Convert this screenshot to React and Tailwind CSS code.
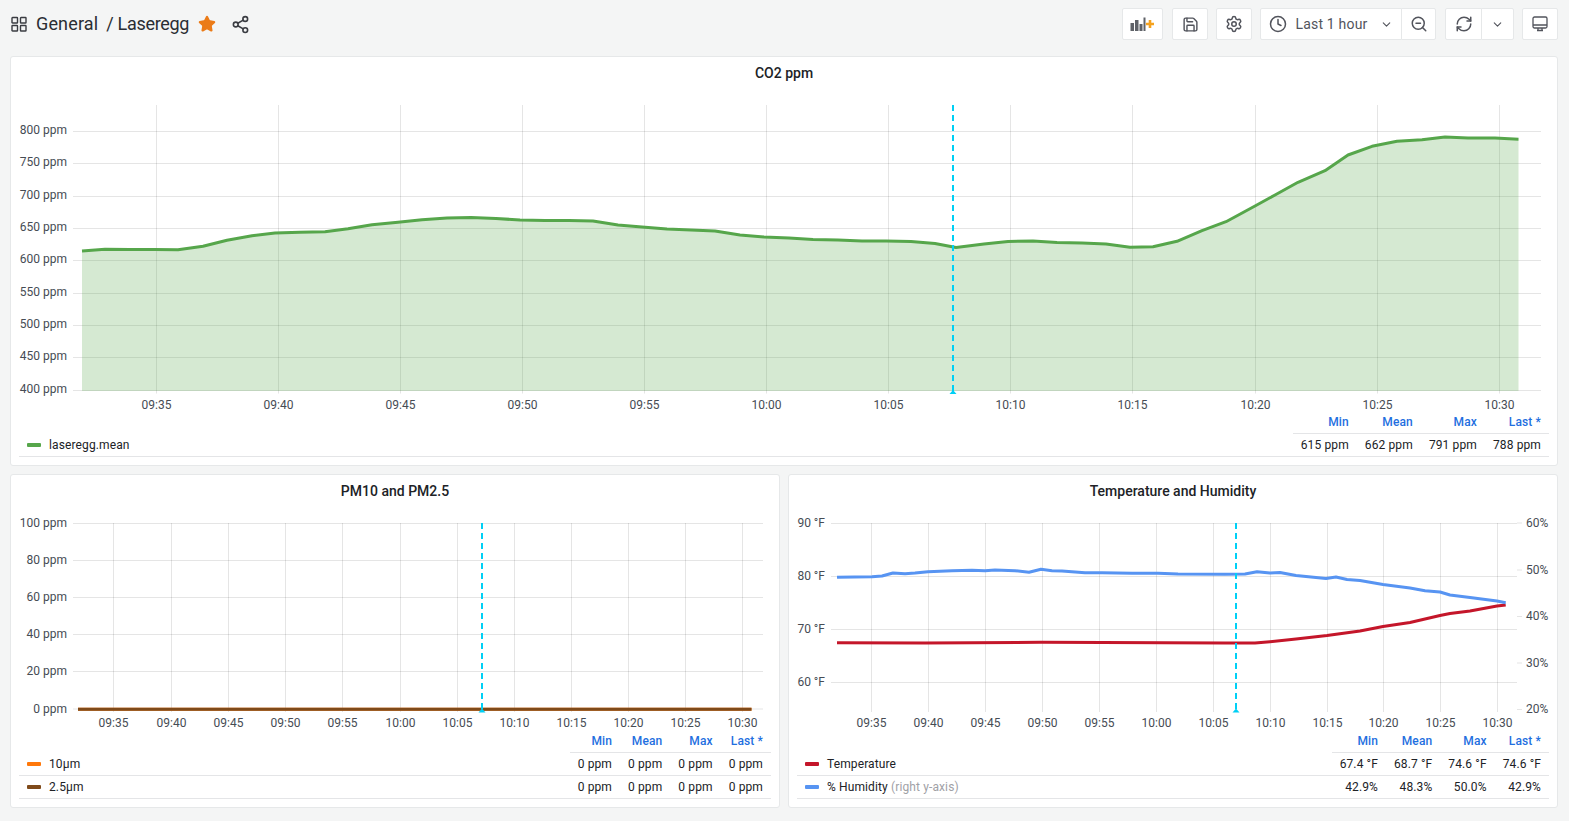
import React from 'react';
import { Clock, ChevronDown, ZoomOut, RefreshCw, Save, Settings, Share2, Star } from 'lucide-react';

const co2Line = [
  [82, 251], [105, 249.3], [130, 249.5], [154, 249.6], [178, 249.7], [203, 246.3], [227, 240.3], [252, 235.7], [275, 233],
  [300, 232.2], [325, 231.7], [348, 228.7], [372, 224.7], [398, 222.3], [422, 219.7], [447, 218], [471, 217.5], [496, 218.5],
  [520, 220], [545, 220.5], [569, 220.5], [593, 221], [618, 225], [642, 227], [667, 229], [691, 230], [715, 231],
  [740, 235], [764, 237], [789, 238], [813, 239.5], [838, 240], [862, 241], [886, 241], [911, 241.5], [935, 243.5],
  [956, 247.5], [984, 244], [1008, 241.5], [1033, 241], [1057, 242.5], [1082, 243], [1106, 244], [1130, 247.3],
  [1153, 246.7], [1177, 241.3], [1202, 230.7], [1226, 221.7], [1255, 206], [1275, 195], [1298, 182.3], [1325, 170.7],
  [1348, 155], [1372, 146.3], [1397, 141.3], [1422, 139.7], [1445, 137], [1468, 138], [1495, 138], [1518.5, 139.3],
];

const humidityLine = [
  [837, 577.3], [872, 576.7], [882, 576], [893, 573], [905, 573.7], [915, 573], [928, 571.7], [952, 570.7], [972, 570.3],
  [985, 570.7], [995, 570], [1015, 570.7], [1029, 572.3], [1041, 569.3], [1052, 570.7], [1062, 571], [1085, 572.7],
  [1102, 572.7], [1132, 573.3], [1158, 573.3], [1178, 574], [1225, 574.3], [1245, 574], [1257, 571.7], [1270, 573],
  [1280, 572.5], [1296, 575.5], [1326, 578.5], [1336, 577], [1347, 579.5], [1360, 580.5], [1383, 584.5], [1410, 588],
  [1425, 590.7], [1440, 592], [1450, 595], [1470, 597.5], [1497, 601], [1505.7, 602.7],
];

const tempLine = [
  [837, 642.7], [925, 643], [1041, 642.3], [1225, 643], [1255, 643],
  [1270, 641.7], [1296, 639], [1327, 635.5], [1360, 631], [1383, 626.5], [1410, 622.5], [1440, 615.5], [1450, 613.5],
  [1470, 611], [1497, 606], [1505.7, 605],
];

const times = ['09:35', '09:40', '09:45', '09:50', '09:55', '10:00', '10:05', '10:10', '10:15', '10:20', '10:25', '10:30'];

const toPoints = (line) => line.map((p) => p.join(',')).join(' ');

const Chart = ({ box, xTicks, yTicks, rightTicks = [], gridRight, top, bottom, tickFrom, hoverX, labelDy = 2.5, children }) => (
  <svg viewBox={box.join(' ')} width={box[2]} height={box[3]} className="block shrink-0">
    {yTicks.map(([label, y]) => (
      <g key={label}>
        <line x1={tickFrom} x2={gridRight} y1={y} y2={y} stroke="#000" strokeOpacity="0.1" />
        <text x={tickFrom - 6} y={y + labelDy} textAnchor="end" className="text-xs fill-[#464c54]">{label}</text>
      </g>
    ))}
    {xTicks.map((x, i) => (
      <g key={x}>
        <line x1={x} x2={x} y1={top} y2={bottom + 3} stroke="#000" strokeOpacity="0.1" />
        <text x={x} y={bottom + 18} textAnchor="middle" className="text-xs fill-[#464c54]">{times[i]}</text>
      </g>
    ))}
    {rightTicks.map(([label, y]) => (
      <g key={label}>
        <line x1={gridRight} x2={gridRight + 5} y1={y} y2={y} stroke="#000" strokeOpacity="0.1" />
        <text x={gridRight + 9} y={y + labelDy} className="text-xs fill-[#464c54]">{label}</text>
      </g>
    ))}
    {children}
    <line x1={hoverX} x2={hoverX} y1={top} y2={bottom + 1} stroke="#00d0f5" strokeWidth="2" strokeDasharray="6 4" />
    <polygon points={`${hoverX - 3.5},${bottom + 3.5} ${hoverX + 3.5},${bottom + 3.5} ${hoverX},${bottom - 0.5}`} fill="#00d0f5" />
  </svg>
);

const Legend = ({ rows }) => (
  <table className="w-full text-xs tracking-[0.12px] text-[#202226] border-separate border-spacing-0">
    <thead>
      <tr>
        <th className="w-full" />
        {['Min', 'Mean', 'Max', 'Last *'].map((h) => (
          <th key={h} className="h-[23px] px-2 text-right font-medium text-[#1f6fe0] border-b border-[#e4e5e7] whitespace-nowrap">{h}</th>
        ))}
      </tr>
    </thead>
    <tbody>
      {rows.map((row) => (
        <tr key={row.name}>
          <td className="h-[23px] px-2 border-b border-[#e4e5e7]">
            <div className="flex items-center gap-2">
              <span className={`w-[14px] h-[4px] rounded-[1px] ${row.color}`} />
              <span>
                {row.name}
                {row.note && <span className="text-[#9fa1a6]"> {row.note}</span>}
              </span>
            </div>
          </td>
          {row.values.map((v, i) => (
            <td key={i} className="h-[23px] px-2 text-right border-b border-[#e4e5e7] whitespace-nowrap">{v}</td>
          ))}
        </tr>
      ))}
    </tbody>
  </table>
);

const Panel = ({ title, children, legend }) => (
  <section className="flex flex-col bg-white border border-[#e6e8e9] rounded-[3px]">
    <h2 className="h-[32px] shrink-0 flex items-center justify-center text-sm font-medium text-[#202226]">{title}</h2>
    {children}
    <div className="px-2 pb-2">{legend}</div>
  </section>
);

const ToolButton = ({ className = '', children }) => (
  <button className={`h-8 flex items-center justify-center bg-white border border-[#e6e8e9] text-[#52545c] ${className}`}>
    {children}
  </button>
);

const AddPanelIcon = () => (
  <svg width="25" height="16" viewBox="0 0 25 16">
    <g fill="#5f6268">
      <rect x="0.5" y="7" width="3.5" height="8" />
      <rect x="5" y="4" width="3.5" height="11" />
      <rect x="9.5" y="8" width="3" height="7" />
      <rect x="13.5" y="1.5" width="2" height="13.5" />
    </g>
    <path d="M20 4v8M16 8h8" stroke="#f5a21e" strokeWidth="2.6" />
  </svg>
);

const GridIcon = () => (
  <svg width="16" height="16" viewBox="0 0 16 16" fill="none" stroke="#3a3c42" strokeWidth="1.4">
    <rect x="1" y="1.5" width="5.5" height="5.5" rx="0.6" />
    <rect x="9.5" y="1.5" width="5.5" height="5.5" rx="0.6" />
    <rect x="1" y="9.5" width="5.5" height="5.5" rx="0.6" />
    <rect x="9.5" y="9.5" width="5.5" height="5.5" rx="0.6" />
  </svg>
);

const TvIcon = () => (
  <svg width="16" height="16" viewBox="0 0 16 16" fill="none" stroke="#52545c" strokeWidth="1.3">
    <rect x="1" y="1" width="14" height="11" rx="1.5" />
    <path d="M1 9h14M5 14.5h6" />
    <path d="M6 12v2.5M10 12v2.5" />
  </svg>
);

const App = () => (
  <div className="min-h-screen bg-[#f4f5f5] pl-[10px] pr-[11px] font-['Roboto',sans-serif]">
    <header className="h-[56px] flex items-center justify-between pb-[8px]">
      <div className="flex items-center text-[#2a2d33]">
        <span className="ml-[1px] mr-[9px]"><GridIcon /></span>
        <span className="text-lg tracking-[0.15px]">General</span>
        <span className="text-lg ml-[8px] tracking-[-0.3px]">/ Laseregg</span>
        <Star size={18} className="ml-[9px] text-[#eb7b18] fill-[#eb7b18]" />
        <Share2 size={19} className="ml-[15px] text-[#3a3c42]" />
      </div>
      <div className="flex items-center">
        <ToolButton className="w-[41px] rounded-[2px]"><AddPanelIcon /></ToolButton>
        <ToolButton className="w-[36px] ml-[9px] rounded-[2px]"><Save size={17} /></ToolButton>
        <ToolButton className="w-[36px] ml-[8px] rounded-[2px]"><Settings size={18} /></ToolButton>
        <ToolButton className="w-[142px] ml-[8px] rounded-l-[2px] gap-[8px] text-sm tracking-[0.2px]">
          <Clock size={18} />
          <span>Last 1 hour</span>
          <ChevronDown size={13} className="ml-[4px]" />
        </ToolButton>
        <ToolButton className="w-[35px] -ml-px rounded-r-[2px]"><ZoomOut size={18} /></ToolButton>
        <ToolButton className="w-[37px] ml-[9px] rounded-l-[2px]"><RefreshCw size={18} /></ToolButton>
        <ToolButton className="w-[33px] -ml-px rounded-r-[2px]"><ChevronDown size={13} /></ToolButton>
        <ToolButton className="w-[36px] ml-[8px] rounded-[2px]"><TvIcon /></ToolButton>
      </div>
    </header>

    <Panel
      title="CO2 ppm"
      legend={<Legend rows={[{ name: 'laseregg.mean', color: 'bg-[#56a64b]', values: ['615 ppm', '662 ppm', '791 ppm', '788 ppm'] }]} />}
    >
      <Chart
        box={[11, 89, 1546, 322]}
        xTicks={[156.5, 278.5, 400.5, 522.5, 644.5, 766.5, 888.5, 1010.5, 1132.5, 1255.5, 1377.5, 1499.5]}
        yTicks={[['800 ppm', 131.5], ['750 ppm', 163.5], ['700 ppm', 196.5], ['650 ppm', 228.5], ['600 ppm', 260.5], ['550 ppm', 293.5], ['500 ppm', 325.5], ['450 ppm', 357.5], ['400 ppm', 390.5]]}
        gridRight={1541}
        tickFrom={73}
        top={105}
        bottom={390.5}
        hoverX={953}
      >
        <polygon points={`82,391 ${toPoints(co2Line)} 1518.5,391`} fill="#56a64b" fillOpacity="0.25" />
        <polyline points={toPoints(co2Line)} fill="none" stroke="#56a64b" strokeWidth="3" strokeLinejoin="round" />
      </Chart>
    </Panel>

    <div className="grid grid-cols-[770px_1fr] gap-[8px] mt-[8px]">
      <Panel
        title="PM10 and PM2.5"
        legend={
          <Legend
            rows={[
              { name: '10µm', color: 'bg-[#ff780a]', values: ['0 ppm', '0 ppm', '0 ppm', '0 ppm'] },
              { name: '2.5µm', color: 'bg-[#7f4a1a]', values: ['0 ppm', '0 ppm', '0 ppm', '0 ppm'] },
            ]}
          />
        }
      >
        <Chart
          box={[11, 507, 768, 223]}
          xTicks={[113.5, 171.5, 228.5, 285.5, 342.5, 400.5, 457.5, 514.5, 571.5, 628.5, 685.5, 742.5]}
          yTicks={[['100 ppm', 523.5], ['80 ppm', 560.5], ['60 ppm', 597.5], ['40 ppm', 634.5], ['20 ppm', 671.5], ['0 ppm', 709]]}
          gridRight={763}
          tickFrom={73}
          top={523}
          bottom={709}
          hoverX={482}
          labelDy={3.5}
        >
          <line x1="78" x2="751.5" y1="709.3" y2="709.3" stroke="#ff780a" strokeWidth="3" />
          <line x1="78" x2="751.5" y1="709.3" y2="709.3" stroke="#7f4a1a" strokeWidth="3" />
        </Chart>
      </Panel>

      <Panel
        title="Temperature and Humidity"
        legend={
          <Legend
            rows={[
              { name: 'Temperature', color: 'bg-[#c4162a]', values: ['67.4 °F', '68.7 °F', '74.6 °F', '74.6 °F'] },
              { name: '% Humidity', note: '(right y-axis)', color: 'bg-[#5794f2]', values: ['42.9%', '48.3%', '50.0%', '42.9%'] },
            ]}
          />
        }
      >
        <Chart
          box={[789, 507, 768, 223]}
          xTicks={[871.5, 928.5, 985.5, 1042.5, 1099.5, 1156.5, 1213.5, 1270.5, 1327.5, 1383.5, 1440.5, 1497.5]}
          yTicks={[['90 °F', 523.5], ['80 °F', 576.5], ['70 °F', 629.5], ['60 °F', 682.5]]}
          rightTicks={[['60%', 523], ['50%', 570], ['40%', 616.5], ['30%', 663], ['20%', 709.5]]}
          gridRight={1517}
          tickFrom={831}
          top={523}
          bottom={709}
          hoverX={1236}
          labelDy={3.5}
        >
          <polyline points={toPoints(tempLine)} fill="none" stroke="#c4162a" strokeWidth="3" strokeLinejoin="round" />
          <polyline points={toPoints(humidityLine)} fill="none" stroke="#5794f2" strokeWidth="3" strokeLinejoin="round" />
        </Chart>
      </Panel>
    </div>
  </div>
);

export default App;
